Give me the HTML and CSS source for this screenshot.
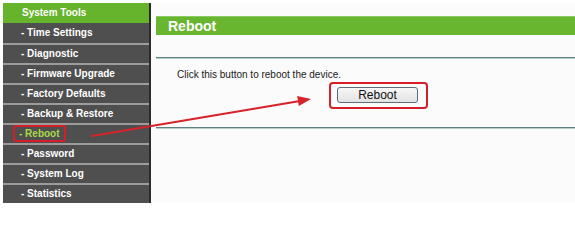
FILE: index.html
```html
<!DOCTYPE html>
<html>
<head>
<meta charset="utf-8">
<link rel="stylesheet" href="styles.css">
</head>
<body>
<div class="page">
  <nav class="sidebar">
    <div class="item head">System Tools</div>
    <div class="item first">- Time Settings</div>
    <div class="item">- Diagnostic</div>
    <div class="item">- Firmware Upgrade</div>
    <div class="item">- Factory Defaults</div>
    <div class="item">- Backup &amp; Restore</div>
    <div class="item"><span class="active">- Reboot</span></div>
    <div class="item">- Password</div>
    <div class="item">- System Log</div>
    <div class="item">- Statistics</div>
  </nav>
  <main class="main">
    <div class="title">Reboot</div>
    <div class="rule first-rule"></div>
    <p class="desc">Click this button to reboot the device.</p>
    <div class="btn-wrap"><span class="highlight"><button class="btn">Reboot</button></span></div>
    <div class="rule second-rule"></div>
  </main>
  <svg class="arrow" width="575" height="203" viewBox="0 0 575 203">
    <line x1="92" y1="136" x2="300" y2="101" stroke="#d8232a" stroke-width="2.2" stroke-linecap="round"/>
    <polygon points="311,99 298.8,106 297.2,96" fill="#d8232a"/>
  </svg>
</div>
</body>
</html>
```
FILE: styles.css
```css
html, body {
  margin: 0;
  padding: 0;
  background: #ffffff;
}
.page {
  position: relative;
  width: 575px;
  height: 203px;
  overflow: hidden;
  display: flex;
  padding: 3px 0 0 3px;
  box-sizing: border-box;
  font-family: "Liberation Sans", Arial, sans-serif;
}
.sidebar {
  width: 146px;
  flex: none;
  background: #4f4f4f;
  border-right: 2px solid #2b2b2b;
  display: flex;
  flex-direction: column;
}
.item {
  height: 18px;
  line-height: 18px;
  border-top: 2px solid #9c9c9c;
  color: #ffffff;
  font-weight: bold;
  font-size: 10px;
  padding-left: 18px;
  white-space: nowrap;
}
.item.head {
  height: 20px;
  line-height: 20px;
  border-top: none;
  background: #66b42c;
  padding-left: 19px;
}
.item.first {
  border-top: none;
  height: 20px;
  line-height: 20px;
}
.active {
  color: #a9d84a;
  display: inline-block;
  line-height: 12px;
  padding: 1px 4px 0 4px;
  margin-left: -8px;
  border: 2px solid #d41f2a;
  border-radius: 3px;
}
.main {
  flex: 1;
  background: #fbfbfb;
  padding: 13px 0 0 5px;
  display: flex;
  flex-direction: column;
}
.title {
  height: 19px;
  line-height: 19px;
  background: #68b530;
  border-top: 1px solid #8cc964;
  box-sizing: border-box;
  color: #ffffff;
  font-weight: bold;
  font-size: 14px;
  padding-left: 12px;
}
.rule {
  height: 1px;
  background: #5f8080;
  border-bottom: 1px solid #b9cccc;
}
.first-rule {
  margin-top: 22px;
}
.desc {
  margin: 10px 0 0 21px;
  font-size: 10px;
  line-height: 12px;
  color: #1a1a1a;
}
.btn-wrap {
  margin-top: 1px;
  padding-left: 173px;
  display: flex;
}
.highlight {
  display: flex;
  width: 99px;
  height: 27px;
  box-sizing: border-box;
  padding: 3px 0 0 6px;
  border: 2px solid #d41f2a;
  border-radius: 4px;
}
.btn {
  width: 81px;
  height: 16px;
  margin: 0;
  padding: 0;
  font-family: "Liberation Sans", Arial, sans-serif;
  font-size: 12px;
  line-height: 14px;
  color: #111111;
  background: linear-gradient(#f7f7f7, #e2e2e2);
  border: 1px solid #5d6c7a;
  border-radius: 3px;
}
.second-rule {
  margin-top: 18px;
}
.arrow {
  position: absolute;
  left: 0;
  top: 0;
  pointer-events: none;
}
```
